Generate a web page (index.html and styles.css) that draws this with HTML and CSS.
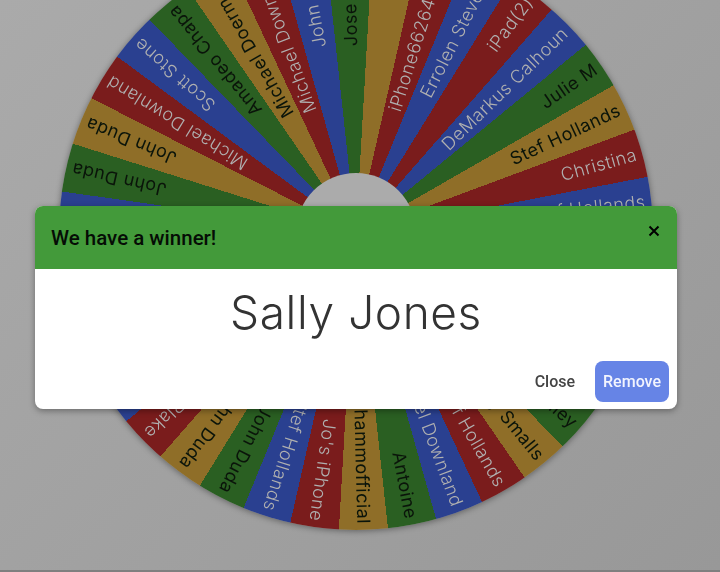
FILE: index.html
```html
<!DOCTYPE html>
<html lang="en">
<head>
<meta charset="utf-8">
<title>Winner</title>
<link rel="stylesheet" href="styles.css">
</head>
<body>
<main class="stage">
  <div class="wheel">
    <div class="hub"></div>
    <span class="label dark" style="transform:rotate(-91.43deg)">Jose Aguila</span>
    <span class="label light" style="transform:rotate(-72.48deg)">iPhone662646245</span>
    <span class="label light" style="transform:rotate(-63.01deg)">Errolen Stevens</span>
    <span class="label light" style="transform:rotate(-53.54deg)">iPad(2)</span>
    <span class="label light" style="transform:rotate(-44.06deg)">DeMarkus Calhoun</span>
    <span class="label dark" style="transform:rotate(-34.59deg)">Julie M</span>
    <span class="label dark" style="transform:rotate(-25.12deg)">Stef Hollands</span>
    <span class="label light" style="transform:rotate(-15.64deg)">Christina</span>
    <span class="label light" style="transform:rotate(-6.17deg)">Stef Hollands</span>
    <span class="label dark" style="transform:rotate(41.2deg)">Bailey</span>
    <span class="label dark" style="transform:rotate(50.67deg)">Jay Smalls</span>
    <span class="label light" style="transform:rotate(60.15deg)">Stef Hollands</span>
    <span class="label light" style="transform:rotate(69.62deg)">Michael Downland</span>
    <span class="label dark" style="transform:rotate(79.09deg)">Antoine</span>
    <span class="label dark" style="transform:rotate(88.57deg)">mohammofficial</span>
    <span class="label light" style="transform:rotate(98.04deg)">Jo's iPhone</span>
    <span class="label light" style="transform:rotate(107.5deg)">Stef Hollands</span>
    <span class="label dark" style="transform:rotate(117deg)">John Duda</span>
    <span class="label dark" style="transform:rotate(126.46deg)">John Duda</span>
    <span class="label light" style="transform:rotate(135.9deg)">Blake</span>
    <span class="label dark" style="transform:rotate(192.8deg)">John Duda</span>
    <span class="label dark" style="transform:rotate(202.3deg)">John Duda</span>
    <span class="label light" style="transform:rotate(211.7deg)">Michael Downland</span>
    <span class="label light" style="transform:rotate(221.2deg)">Scott Stone</span>
    <span class="label dark" style="transform:rotate(230.7deg)">Amadeo Chapa</span>
    <span class="label dark" style="transform:rotate(240.2deg)">Michael Doerman</span>
    <span class="label light" style="transform:rotate(249.6deg)">Michael Downland</span>
    <span class="label light" style="transform:rotate(259.1deg)">John Harris</span>
  </div>
</main>
<section class="modal" role="dialog">
  <header class="modal-head">
    <h2 class="modal-title">We have a winner!</h2>
    <button class="modal-x" aria-label="Close">
      <svg viewBox="0 0 12 12" width="12" height="12"><path class="x-path" d="M1.5 1.5 10.5 10.5M10.5 1.5 1.5 10.5"/></svg>
    </button>
  </header>
  <div class="modal-body">
    <p class="winner">Sally Jones</p>
    <div class="actions">
      <button class="btn btn-plain">Close</button>
      <button class="btn btn-primary">Remove</button>
    </div>
  </div>
</section>
</body>
</html>
```
FILE: styles.css
```css
* { box-sizing: border-box; }
html, body { margin: 0; height: 100%; }
body {
  width: 720px;
  height: 572px;
  overflow: hidden;
  position: relative;
  background: #a3a3a3;
  font-family: Roboto, sans-serif;
}
.stage {
  height: 572px;
  overflow: hidden;
  background: linear-gradient(135deg, #aaaaaa 0%, #989898 100%);
  border-bottom: 2px solid #7f7f7f;
  filter: blur(0.5px);
}
.wheel {
  --r: #7a1c1c;
  --b: #2a4090;
  --g: #2a5f22;
  --y: #8f6e28;
  position: relative;
  width: 594px;
  height: 594px;
  margin: -64px 0 0 59px;
  border-radius: 50%;
  box-shadow: 0 1px 6px rgba(0,0,0,.4);
  background: conic-gradient(from -6.17deg,
    var(--g) 0 9.474deg, var(--y) 0 18.947deg, var(--r) 0 28.421deg, var(--b) 0 37.895deg,
    var(--r) 0 47.368deg, var(--b) 0 56.842deg, var(--g) 0 66.316deg, var(--y) 0 75.789deg,
    var(--r) 0 85.263deg, var(--b) 0 94.737deg, var(--g) 0 104.21deg, var(--y) 0 113.68deg,
    var(--r) 0 123.16deg, var(--b) 0 132.63deg, var(--g) 0 142.11deg, var(--y) 0 151.58deg,
    var(--r) 0 161.05deg, var(--b) 0 170.53deg, var(--g) 0 180deg, var(--y) 0 189.47deg,
    var(--r) 0 198.95deg, var(--b) 0 208.42deg, var(--g) 0 217.89deg, var(--y) 0 227.37deg,
    var(--r) 0 236.84deg, var(--b) 0 246.32deg, var(--g) 0 255.79deg, var(--y) 0 265.26deg,
    var(--r) 0 274.74deg, var(--b) 0 284.21deg, var(--g) 0 293.68deg, var(--y) 0 303.16deg,
    var(--r) 0 312.63deg, var(--b) 0 322.11deg, var(--g) 0 331.58deg, var(--y) 0 341.05deg,
    var(--r) 0 350.53deg, var(--b) 0 360deg);
}
.hub {
  position: absolute;
  left: 237px;
  top: 237px;
  width: 120px;
  height: 120px;
  border-radius: 50%;
  background: #ababab;
}
.label {
  position: absolute;
  left: 297px;
  top: 285px;
  width: 291px;
  height: 24px;
  line-height: 24px;
  font-family: Inter, sans-serif;
  font-size: 18px;
  font-weight: 300;
  letter-spacing: .45px;
  text-align: right;
  white-space: nowrap;
  transform-origin: 0 12px;
}
.dark { color: #0a140a; font-weight: 400; }
.light { color: #b0b0b0; }
.modal {
  position: absolute;
  left: 35px;
  top: 206px;
  width: 642px;
  height: 203px;
  background: #fff;
  border-radius: 8px;
  overflow: hidden;
  box-shadow: 0 2px 6px rgba(0,0,0,.35);
  filter: blur(0.3px);
}
.modal-head {
  height: 63px;
  padding: 0 16px;
  display: flex;
  align-items: center;
  justify-content: space-between;
  background: #439a3a;
}
.modal-title {
  margin: 0;
  font-size: 20.5px;
  font-weight: 500;
  color: #050c05;
}
.modal-x {
  margin: -14px 1px 0 0;
  padding: 0;
  border: 0;
  background: none;
  display: flex;
}
.x-path { fill: none; stroke: #000; stroke-width: 2; }
.modal-body {
  height: 140px;
  padding: 8px 8px 7px;
  display: flex;
  flex-direction: column;
  justify-content: space-between;
}
.winner {
  margin: 0;
  text-align: center;
  font-family: Inter, sans-serif;
  font-size: 46px;
  font-weight: 300;
  line-height: 70px;
  letter-spacing: .6px;
  color: #333;
}
.actions {
  display: flex;
  justify-content: flex-end;
  gap: 4px;
}
.btn {
  height: 41px;
  border: 0;
  border-radius: 8px;
  padding: 0 8px;
  font-family: Roboto, sans-serif;
  font-size: 16px;
  font-weight: 500;
  background: none;
}
.btn-plain { color: #444; padding: 0 16px; }
.btn-primary { background: #6684e6; color: #f2f4fe; }
```
